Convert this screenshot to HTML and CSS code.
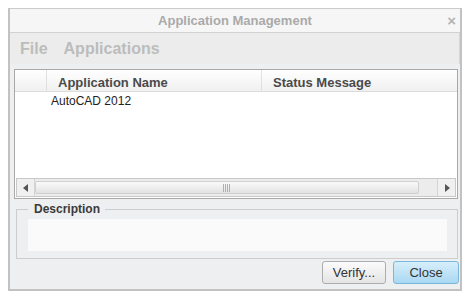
FILE: index.html
```html
<!DOCTYPE html>
<html>
<head>
<title>Application Management</title>
<link rel="stylesheet" href="styles.css">
</head>
<body>
<div class="window">
  <div class="titlebar">
    <span class="title">Application Management</span>
    <span class="close-x">&#215;</span>
  </div>
  <div class="menubar">
    <span class="menu">File</span>
    <span class="menu">Applications</span>
  </div>
  <div class="table">
    <div class="thead">
      <div class="col col-first"></div>
      <div class="col col-name">Application Name</div>
      <div class="col col-status">Status Message</div>
    </div>
    <div class="tbody">
      <div class="row">AutoCAD 2012</div>
    </div>
    <div class="hscroll">
      <div class="sbtn">
        <svg width="6" height="8" viewBox="0 0 6 8"><path d="M5 0 L0 4 L5 8 Z" fill="#555"/></svg>
      </div>
      <div class="track">
        <div class="thumb">
          <svg width="9" height="8" viewBox="0 0 9 8"><path d="M0.5 0V8M2.5 0V8M4.5 0V8M6.5 0V8" stroke="#b0b0b0" stroke-width="1"/></svg>
        </div>
      </div>
      <div class="sbtn">
        <svg width="6" height="8" viewBox="0 0 6 8"><path d="M1 0 L6 4 L1 8 Z" fill="#555"/></svg>
      </div>
    </div>
  </div>
  <div class="group">
    <span class="legend">Description</span>
    <div class="desc"></div>
  </div>
  <div class="buttons">
    <span class="btn">Verify...</span>
    <span class="btn btn-default">Close</span>
  </div>
</div>
</body>
</html>
```

FILE: styles.css
```css
/* Application Management dialog */

body
{ margin: 0;
padding: 8px 4px 6px 8px;
background-color: white;
font-family: "Liberation Sans", Arial, sans-serif;
}

div.window
{ width: 450px;
height: 280px;
border: 2px solid #c2c2c2;
border-top: 1px solid #cacaca;
background-color: #eeeff0;
display: flex;
flex-direction: column;
}

div.window > div
{ flex-shrink: 0;
}

div.titlebar
{ height: 23px;
background-color: #f6f6f6;
border-bottom: 1px solid #d2d2d2;
display: flex;
align-items: center;
justify-content: center;
position: relative;
}

span.title
{ font-size: 13px;
font-weight: bold;
color: #aaaaaa;
}

span.close-x
{ position: absolute;
right: 4px;
top: 3px;
font-size: 15px;
font-weight: bold;
color: #b4b4b4;
}

div.menubar
{ height: 31px;
display: flex;
align-items: center;
gap: 16px;
padding-left: 10px;
background-color: #ececec;
border-right: 1px solid #d6d6d6;
}

span.menu
{ font-size: 16px;
font-weight: bold;
color: #bcbcbc;
}

div.table
{ margin: 5px 2px 0 4px;
border: 1px solid #a8a8a8;
background-color: white;
height: 128px;
display: flex;
flex-direction: column;
}

div.thead
{ height: 21px;
display: flex;
background: linear-gradient(#ffffff, #f0f0f0);
border-bottom: 1px solid #dcdcdc;
}

div.col
{ font-size: 13px;
font-weight: bold;
color: #4a4a4a;
line-height: 15px;
padding-top: 5px;
border-right: 1px solid #e0e0e0;
}

div.col-first
{ width: 31px;
}

div.col-name
{ width: 203px;
padding-left: 11px;
}

div.col-status
{ flex: 1;
padding-left: 11px;
border-right: none;
}

div.tbody
{ flex: 1;
}

div.row
{ font-size: 12px;
color: #222;
padding-left: 36px;
line-height: 17px;
padding-top: 1px;
}

div.hscroll
{ height: 17px;
margin: 0 1px 1px 1px;
display: flex;
border: 1px solid #c8c8c8;
background-color: #ececec;
}

div.sbtn
{ width: 17px;
display: flex;
align-items: center;
justify-content: center;
background-color: #f0f0f0;
}

div.track
{ flex: 1;
padding: 2px 18px 2px 0;
border-left: 1px solid #d4d4d4;
border-right: 1px solid #d4d4d4;
display: flex;
}

div.thumb
{ flex: 1;
background: linear-gradient(#fafafa, #e2e2e2);
border: 1px solid #d0d0d0;
border-radius: 2px;
display: flex;
align-items: center;
justify-content: center;
}

div.group
{ margin: 10px 2px 0 6px;
height: 32px;
border: 1px solid #cdcdcd;
position: relative;
padding: 9px 10px 7px 11px;
}

span.legend
{ position: absolute;
top: -8px;
left: 11px;
padding: 0 5px 0 6px;
background-color: #eeeff0;
font-size: 12px;
font-weight: bold;
color: #3a3a3a;
}

div.desc
{ height: 32px;
background-color: #fafafb;
}

div.buttons
{ display: flex;
justify-content: flex-end;
gap: 7px;
margin: 2px 1px 0 0;
}

span.btn
{ width: 62px;
height: 21px;
line-height: 21px;
text-align: center;
font-size: 13px;
color: #333;
border: 1px solid #adadad;
border-radius: 3px;
background: linear-gradient(#fbfbfb, #e4e4e4);
}

span.btn-default
{ width: 64px;
border-color: #7ab7dc;
background: linear-gradient(#d7eefa, #a9d8f3);
}
```
